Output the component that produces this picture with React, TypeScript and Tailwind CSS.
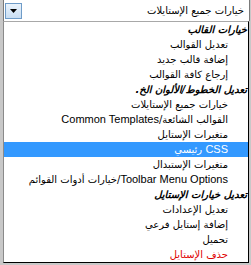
import * as React from "react";

type Item = { label: React.ReactNode; kind?: "group" | "selected" | "danger" };

function Latin({ children }: { children: React.ReactNode }) {
  return (
    <span className="text-[11px]" style={{ fontFamily: '"Liberation Sans", Arial, sans-serif' }}>
      {children}
    </span>
  );
}

const items: Item[] = [
  { label: "خيارات القالب", kind: "group" },
  { label: "تعديل القوالب" },
  { label: "إضافة قالب جديد" },
  { label: "إرجاع كافة القوالب" },
  { label: "تعديل الخطوط/الألوان الخ.", kind: "group" },
  { label: "خيارات جميع الإستايلات" },
  { label: <>القوالب الشائعة/<Latin>Common Templates</Latin></> },
  { label: "متغيرات الإستايل" },
  { label: <><Latin>CSS</Latin> رئيسي</>, kind: "selected" },
  { label: "متغيرات الإستبدال" },
  { label: <><Latin>Toolbar Menu Options</Latin>/خيارات أدوات القوائم</> },
  { label: "تعديل خيارات الإستايل", kind: "group" },
  { label: "تعديل الإعدادات" },
  { label: "إضافة إستايل فرعي" },
  { label: "تحميل" },
  { label: "حذف الإستايل", kind: "danger" },
];

function rowClass(kind?: Item["kind"]) {
  if (kind === "group") return "pr-[1px] font-bold italic text-black";
  if (kind === "selected") return "pr-[20px] bg-[#3399ff] text-white";
  if (kind === "danger") return "pr-[20px] text-[#e00000]";
  return "pr-[20px] text-black";
}

export default function App() {
  return (
    <div
      className="h-[265px] w-[251px] overflow-hidden bg-[#c8c8c8] pl-[3px] text-[10px]"
      style={{ fontFamily: '"DejaVu Sans", sans-serif' }}
    >
      <div className="flex h-[21px] w-[247px] items-center border-l border-r border-[#7a7a7a] bg-white">
        <div className="ml-[1px] flex h-[16px] w-[17px] items-center justify-center border border-[#6f9cc8] bg-gradient-to-b from-[#eaf3fc] to-[#c9def3]">
          <svg width="7" height="4" viewBox="0 0 7 4">
            <path d="M0 0h7L3.5 4z" fill="#000" />
          </svg>
        </div>
        <div dir="rtl" className="flex-1 overflow-hidden whitespace-nowrap pr-[5px] leading-[21px] text-black">
          خيارات جميع الإستايلات
        </div>
      </div>
      <div
        dir="rtl"
        className="w-[246px] border-b border-l border-r border-t border-b-black border-l-[#8a8a8a] border-r-black border-t-[#a8a8a8] bg-white"
      >
        {items.map((it, i) => (
          <div key={i} className={`h-[15px] overflow-hidden whitespace-nowrap leading-[15px] ${rowClass(it.kind)}`}>
            {it.label}
          </div>
        ))}
      </div>
    </div>
  );
}
